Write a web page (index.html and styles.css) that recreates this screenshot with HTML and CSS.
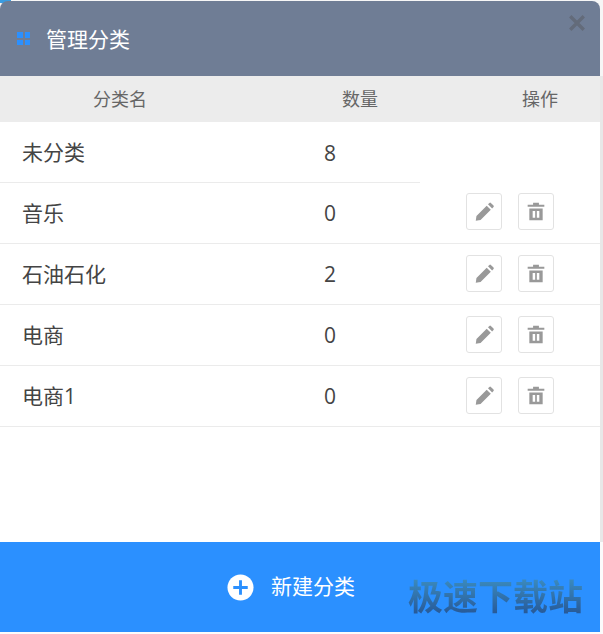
FILE: index.html
```html
<!DOCTYPE html>
<html lang="zh">
<head>
<meta charset="utf-8">
<title>管理分类</title>
<link rel="stylesheet" href="styles.css">
</head>
<body>
<div class="modal">
  <header class="head">
    <span class="dots"><i></i><i></i><i></i><i></i></span>
    <h1 class="title">管理分类</h1>
    <svg class="close" viewBox="0 0 16 16"><path d="M2 2 14 14M14 2 2 14"/></svg>
  </header>
  <div class="row thead">
    <div class="c-name">分类名</div>
    <div class="c-count">数量</div>
    <div class="c-act">操作</div>
  </div>
  <div class="body">
    <div class="row item first">
      <div class="c-name">未分类</div>
      <div class="c-count">8</div>
      <div class="c-act"></div>
    </div>
    <div class="row item">
      <div class="c-name">音乐</div>
      <div class="c-count">0</div>
      <div class="c-act">
        <button class="btn"><svg class="pen" viewBox="0 0 24 24"><path d="M2 22.500l.8-5.500L14.500 5.300l4.700 4.700L7.500 21.700zM16 3.800l1.600-1.600a1.200 1.200 0 0 1 1.700 0l3 3a1.200 1.200 0 0 1 0 1.700L20.700 8.500z"/></svg></button>
        <button class="btn"><svg viewBox="0 0 24 24"><path d="M2 4.500h6.500V2h7v2.500H22v2.500H2zM4 9h16v14H4zM8 12v8h3v-8zM13 12v8h3v-8z" fill-rule="evenodd"/></svg></button>
      </div>
    </div>
    <div class="row item">
      <div class="c-name">石油石化</div>
      <div class="c-count">2</div>
      <div class="c-act">
        <button class="btn"><svg class="pen" viewBox="0 0 24 24"><path d="M2 22.500l.8-5.500L14.500 5.300l4.700 4.700L7.500 21.700zM16 3.800l1.600-1.600a1.200 1.200 0 0 1 1.700 0l3 3a1.200 1.200 0 0 1 0 1.700L20.700 8.500z"/></svg></button>
        <button class="btn"><svg viewBox="0 0 24 24"><path d="M2 4.500h6.500V2h7v2.500H22v2.500H2zM4 9h16v14H4zM8 12v8h3v-8zM13 12v8h3v-8z" fill-rule="evenodd"/></svg></button>
      </div>
    </div>
    <div class="row item">
      <div class="c-name">电商</div>
      <div class="c-count">0</div>
      <div class="c-act">
        <button class="btn"><svg class="pen" viewBox="0 0 24 24"><path d="M2 22.500l.8-5.500L14.500 5.300l4.700 4.700L7.500 21.700zM16 3.800l1.600-1.600a1.200 1.200 0 0 1 1.700 0l3 3a1.200 1.200 0 0 1 0 1.700L20.700 8.500z"/></svg></button>
        <button class="btn"><svg viewBox="0 0 24 24"><path d="M2 4.500h6.500V2h7v2.500H22v2.500H2zM4 9h16v14H4zM8 12v8h3v-8zM13 12v8h3v-8z" fill-rule="evenodd"/></svg></button>
      </div>
    </div>
    <div class="row item">
      <div class="c-name">电商1</div>
      <div class="c-count">0</div>
      <div class="c-act">
        <button class="btn"><svg class="pen" viewBox="0 0 24 24"><path d="M2 22.500l.8-5.500L14.500 5.300l4.700 4.700L7.500 21.700zM16 3.800l1.600-1.600a1.200 1.200 0 0 1 1.700 0l3 3a1.200 1.200 0 0 1 0 1.700L20.700 8.500z"/></svg></button>
        <button class="btn"><svg viewBox="0 0 24 24"><path d="M2 4.500h6.500V2h7v2.500H22v2.500H2zM4 9h16v14H4zM8 12v8h3v-8zM13 12v8h3v-8z" fill-rule="evenodd"/></svg></button>
      </div>
    </div>
  </div>
  <footer class="foot">
    <svg class="plus" viewBox="0 0 28 28"><circle cx="14" cy="14" r="13.500" fill="#fff"/><path d="M14 6.500v15M6.500 14h15" stroke="#2b90ff" stroke-width="3" fill="none"/></svg>
    <span class="new">新建分类</span>
    <span class="mark">极速下载站</span>
  </footer>
</div>
</body>
</html>
```
FILE: styles.css
```css
* { box-sizing: border-box; }
html, body { margin: 0; height: 100%; }
body {
  background:
    linear-gradient(#3a9be0, #3a9be0) 0 0 / 11px 3px no-repeat,
    linear-gradient(#f6f6f6 0, #f6f6f6 76px, #e8e8e8 76px, #e8e8e8 542px, #fbfbfb 542px);
  overflow: hidden;
  font-family: "Open Sans", "Noto Sans CJK SC", sans-serif;
  padding-top: 1px;
}
.modal {
  width: 600px;
  height: 631px;
  display: flex;
  flex-direction: column;
}
.head {
  height: 75px;
  flex: none;
  background: #6f7d95;
  border-radius: 8px 8px 0 0;
  display: flex;
  align-items: center;
  padding: 0 14px 0 17px;
}
.dots {
  width: 13px;
  display: grid;
  grid-template-columns: 5.500px 5.500px;
  gap: 2px;
  margin-right: 16px;
}
.dots i { height: 5.500px; background: #2b90ff; }
.title {
  margin: 0;
  flex: 1;
  font-size: 21px;
  font-weight: 400;
  line-height: 28px;
  color: #fff;
}
.close {
  width: 18px;
  height: 18px;
  align-self: flex-start;
  margin-top: 13px;
  stroke: #636b7a;
  stroke-width: 3;
  fill: none;
}
.row { display: flex; align-items: center; }
.c-name { width: 300px; line-height: 28px; }
.c-count { width: 120px; line-height: 28px; }
.c-act { width: 180px; line-height: 28px; }
.thead {
  height: 46px;
  flex: none;
  background: #ececec;
  font-size: 18px;
  color: #666;
  text-align: center;
}
.thead .c-name { width: 240px; }
.thead .c-count { width: 240px; }
.thead .c-act { width: 120px; }
.body { flex: 1; background: #fff; }
.item {
  height: 61px;
  font-size: 21px;
  color: #444;
  border-bottom: 1px solid #ebebeb;
}
.item .c-name { padding-left: 22px; }
.item .c-count { padding-left: 24px; }
.item .c-act {
  display: flex;
  gap: 16px;
  padding-left: 46px;
  padding-bottom: 2px;
}
.item:nth-child(2) .c-act { padding-bottom: 4px; }
.first { border-bottom: 0; height: 61px; background: linear-gradient(#ebebeb, #ebebeb) 0 100% / 420px 1px no-repeat; }
.first .c-name { padding-bottom: 2px; }
.btn {
  width: 36px;
  height: 37px;
  padding: 0;
  background: #fff;
  border: 1px solid #e2e2e2;
  border-radius: 3px;
  display: flex;
  align-items: center;
  justify-content: center;
}
.btn svg { width: 20px; height: 20px; fill: #999; }
.btn .pen { width: 21px; height: 21px; }
.foot {
  height: 90px;
  flex: none;
  background: #2b90ff;
  display: flex;
  align-items: center;
  padding-left: 227px;
  position: relative;
}
.plus { width: 27px; height: 27px; margin-right: 17px; }
.new { font-size: 21px; line-height: 28px; color: #fff; padding-bottom: 2px; }
.mark {
  position: absolute;
  left: 408px;
  top: 31px;
  font-size: 35px;
  font-weight: 700;
  line-height: 48px;
  white-space: nowrap;
  background: linear-gradient(#3f93c4, #234f90);
  -webkit-background-clip: text;
  background-clip: text;
  color: transparent;
}
```
